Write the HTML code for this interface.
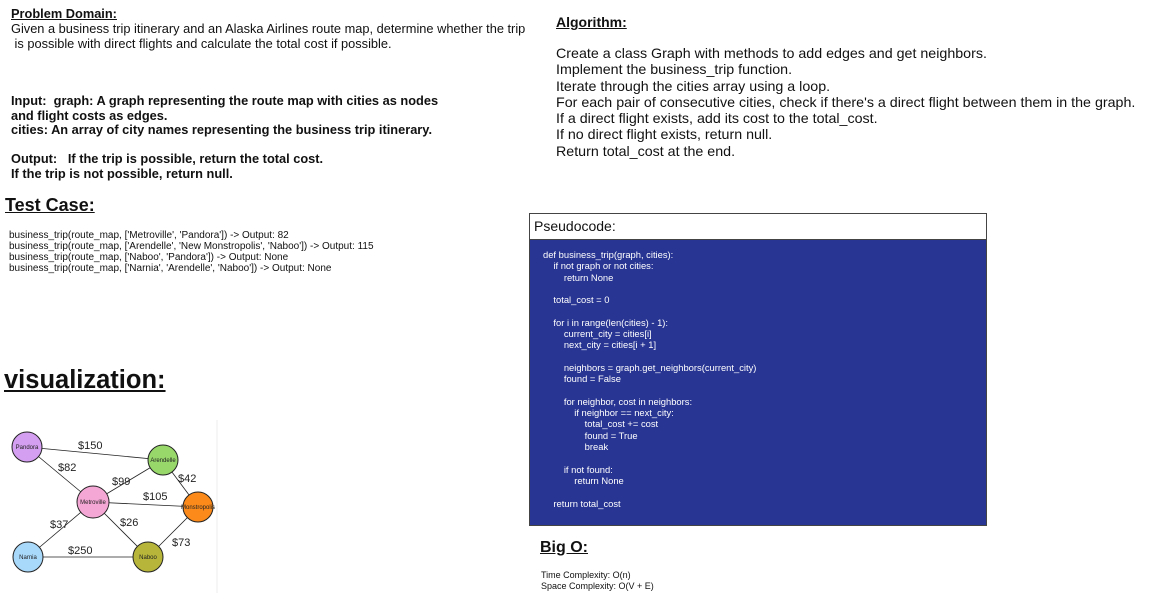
<!DOCTYPE html><html><head><style>
body{margin:0;width:1161px;height:607px;background:#fff;font-family:"Liberation Sans",sans-serif;color:#111;position:relative;overflow:hidden}
.a{position:absolute;white-space:pre;margin:0}
.u{text-decoration:underline}
</style></head><body>
<div class="a" style="left:11px;top:6px;font-size:12.8px;line-height:15px"><b class="u">Problem Domain:</b>
Given a business trip itinerary and an Alaska Airlines route map, determine whether the trip
 is possible with direct flights and calculate the total cost if possible.</div>
<div class="a" style="left:11px;top:94px;font-size:12.8px;line-height:14.5px;font-weight:bold">Input:  graph: A graph representing the route map with cities as nodes
and flight costs as edges.
cities: An array of city names representing the business trip itinerary.

Output:   If the trip is possible, return the total cost.
If the trip is not possible, return null.</div>
<div class="a u" style="left:5px;top:195px;font-size:18px;font-weight:bold">Test Case:</div>
<div class="a" style="left:9px;top:230px;font-size:10px;line-height:11px">business_trip(route_map, ['Metroville', 'Pandora']) -> Output: 82
business_trip(route_map, ['Arendelle', 'New Monstropolis', 'Naboo']) -> Output: 115
business_trip(route_map, ['Naboo', 'Pandora']) -> Output: None
business_trip(route_map, ['Narnia', 'Arendelle', 'Naboo']) -> Output: None</div>
<div class="a u" style="left:4px;top:366px;font-size:25.5px;font-weight:bold">visualization:</div>
<svg class="a" style="left:0;top:418px" width="220" height="180">
<line x1="217" y1="2" x2="217" y2="175" stroke="#eee"/>
<g stroke="#222" stroke-width="0.8">
<line x1="27" y1="29" x2="163" y2="42"/><line x1="27" y1="29" x2="93" y2="84"/>
<line x1="93" y1="84" x2="163" y2="42"/><line x1="93" y1="84" x2="198" y2="89"/>
<line x1="93" y1="84" x2="28" y2="139"/><line x1="93" y1="84" x2="148" y2="139"/>
<line x1="163" y1="42" x2="198" y2="89"/><line x1="198" y1="89" x2="148" y2="139"/>
<line x1="28" y1="139" x2="148" y2="139"/></g>
<g stroke="#222" stroke-width="1">
<circle cx="27" cy="29" r="15" fill="#d49ff0"/><circle cx="163" cy="42" r="15" fill="#98d86a"/>
<circle cx="93" cy="84" r="16" fill="#f4a6d4"/><circle cx="198" cy="89" r="15" fill="#fb8a1a"/>
<circle cx="28" cy="139" r="15" fill="#a8d8fa"/><circle cx="148" cy="139" r="15" fill="#b7b63a"/></g>
<g font-size="6" text-anchor="middle" fill="#222"><text x="27" y="31">Pandora</text><text x="163" y="44">Arendelle</text><text x="93" y="86">Metroville</text><text x="198" y="91">Monstropolis</text><text x="28" y="141">Narnia</text><text x="148" y="141">Naboo</text></g>
<g font-size="11" fill="#222"><text x="78" y="31">$150</text><text x="58" y="53">$82</text><text x="112" y="67">$99</text><text x="143" y="82">$105</text><text x="178" y="64">$42</text><text x="50" y="110">$37</text><text x="120" y="108">$26</text><text x="68" y="136">$250</text><text x="172" y="128">$73</text></g>
</svg>
<div class="a u" style="left:556px;top:14px;font-size:14px;font-weight:bold">Algorithm:</div>
<div class="a" style="left:556px;top:46px;font-size:14.25px;line-height:16.3px">Create a class Graph with methods to add edges and get neighbors.
Implement the business_trip function.
Iterate through the cities array using a loop.
For each pair of consecutive cities, check if there's a direct flight between them in the graph.
If a direct flight exists, add its cost to the total_cost.
If no direct flight exists, return null.
Return total_cost at the end.</div>
<div class="a" style="left:529px;top:213px;width:456px;height:311px;border:1px solid #444;background:#283593"></div>
<div class="a" style="left:530px;top:214px;width:456px;height:26px;background:#fff;border-bottom:1px solid #444;font-size:14px;line-height:24px;padding-left:4px;box-sizing:border-box">Pseudocode:</div>
<div class="a" style="left:543px;top:249px;font-size:9.4px;line-height:11.3px;color:#fff">def business_trip(graph, cities):
    if not graph or not cities:
        return None

    total_cost = 0

    for i in range(len(cities) - 1):
        current_city = cities[i]
        next_city = cities[i + 1]

        neighbors = graph.get_neighbors(current_city)
        found = False

        for neighbor, cost in neighbors:
            if neighbor == next_city:
                total_cost += cost
                found = True
                break

        if not found:
            return None

    return total_cost</div>
<div class="a u" style="left:540px;top:539px;font-size:16px;font-weight:bold">Big O:</div>
<div class="a" style="left:541px;top:570px;font-size:9px;line-height:10.5px">Time Complexity: O(n)
Space Complexity: O(V + E)</div>
</body></html>
